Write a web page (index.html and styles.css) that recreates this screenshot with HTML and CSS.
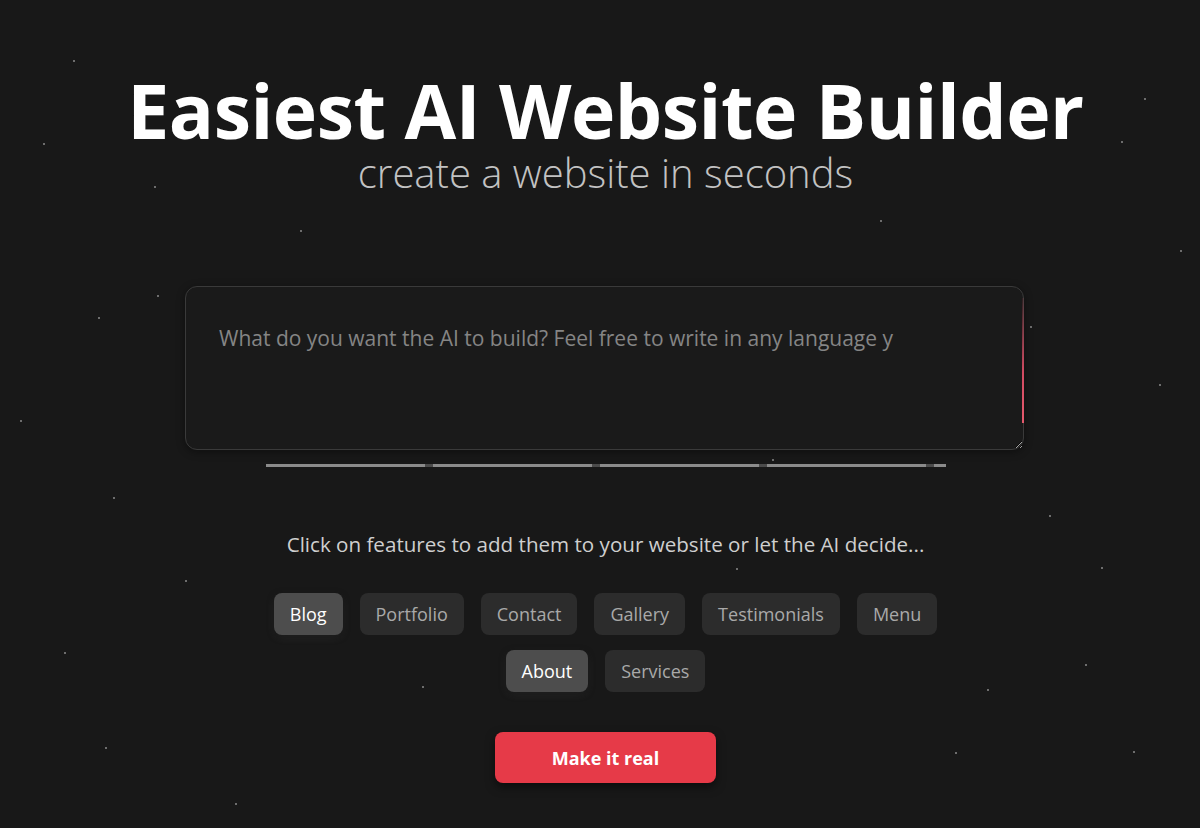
FILE: index.html
```html
<!DOCTYPE html>
<html lang="en">
<head>
<meta charset="utf-8">
<title>Easiest AI Website Builder</title>
<link rel="stylesheet" href="styles.css">
</head>
<body>
<div class="stars" aria-hidden="true">
  <span style="left:73px;top:60px"></span>
  <span style="left:43px;top:143px"></span>
  <span style="left:154px;top:186px"></span>
  <span style="left:157px;top:295px"></span>
  <span style="left:98px;top:317px"></span>
  <span style="left:1121px;top:141px"></span>
  <span style="left:1144px;top:98px"></span>
  <span style="left:1030px;top:326px"></span>
  <span style="left:1159px;top:384px"></span>
  <span style="left:113px;top:497px"></span>
  <span style="left:1049px;top:515px"></span>
  <span style="left:1101px;top:567px"></span>
  <span style="left:185px;top:580px"></span>
  <span style="left:64px;top:652px"></span>
  <span style="left:1085px;top:664px"></span>
  <span style="left:987px;top:689px"></span>
  <span style="left:105px;top:747px"></span>
  <span style="left:955px;top:752px"></span>
  <span style="left:1133px;top:751px"></span>
  <span style="left:235px;top:803px"></span>
  <span style="left:772px;top:459px"></span>
  <span style="left:736px;top:568px"></span>
  <span style="left:422px;top:686px"></span>
  <span style="left:20px;top:420px"></span>
  <span style="left:1180px;top:250px"></span>
  <span style="left:300px;top:230px"></span>
  <span style="left:880px;top:220px"></span>
</div>
<main class="page">
  <header class="hero">
    <h1 class="title">Easiest AI Website Builder</h1>
    <p class="subtitle">create a website in seconds</p>
  </header>

  <section class="prompt">
    <div class="prompt-box">
      <textarea class="prompt-input" placeholder="What do you want the AI to build? Feel free to write in any language y"></textarea>
      <span class="glow"></span>
    </div>
    <div class="progress">
      <span class="seg"></span><span class="gap"></span>
      <span class="seg"></span><span class="gap"></span>
      <span class="seg"></span><span class="gap"></span>
      <span class="seg"></span><span class="gap"></span>
      <span class="seg tail"></span>
    </div>
  </section>

  <section class="features">
    <p class="hint">Click on features to add them to your website or let the AI decide...</p>
    <div class="chips">
      <button class="chip active">Blog</button>
      <button class="chip">Portfolio</button>
      <button class="chip">Contact</button>
      <button class="chip">Gallery</button>
      <button class="chip">Testimonials</button>
      <button class="chip">Menu</button>
      <button class="chip active">About</button>
      <button class="chip">Services</button>
    </div>
    <button class="cta">Make it real</button>
  </section>
</main>
</body>
</html>
```

FILE: styles.css
```css
* { box-sizing: border-box; }
html, body { margin: 0; padding: 0; }
body {
  background: #181818;
  color: #fff;
  font-family: "Open Sans", "Noto Sans", "DejaVu Sans", sans-serif;
  min-height: 828px;
  overflow: hidden;
  position: relative;
}
.stars { position: absolute; inset: 0; pointer-events: none; }
.stars span {
  position: absolute;
  width: 2px; height: 2px;
  border-radius: 50%;
  background: #8a8a8a;
}
.page {
  display: flex;
  flex-direction: column;
  align-items: center;
  padding-top: 70px;
  padding-left: 11px;
  position: relative;
}
.hero {
  text-align: center;
  display: flex;
  flex-direction: column;
  align-items: center;
}
.title {
  margin: 0;
  font-size: 75px;
  font-weight: 700;
  line-height: 80px;
  letter-spacing: -0.5px;
  color: #fff;
}
.subtitle {
  margin: 0;
  font-size: 40px;
  font-weight: 300;
  line-height: 46px;
  color: #c2c2c2;
}
.prompt {
  margin-top: 90px;
  display: flex;
  flex-direction: column;
  align-items: center;
}
.prompt-box {
  position: relative;
  width: 839px;
  height: 164px;
  margin-left: -2px;
}
.prompt-input {
  display: block;
  width: 100%;
  height: 100%;
  background: #1a1a1a;
  border: 1px solid #3a3a3a;
  border-radius: 12px;
  padding: 37px 33px;
  font-family: inherit;
  font-size: 21px;
  color: #ddd;
  outline: none;
  resize: vertical;
  box-shadow: 0 2px 8px rgba(0,0,0,0.4);
}
.prompt-input::placeholder { color: #858585; }
.glow {
  position: absolute;
  right: 0;
  top: 12px;
  width: 2px;
  height: 125px;
  background: linear-gradient(to bottom, rgba(220,80,100,0.1), #d24b62 60%, #e55a6d);
}
.progress {
  display: flex;
  width: 679px;
  height: 3px;
  margin-top: 14px;
}
.progress .seg { flex: 0 0 159px; background: #8b8b8b; }
.progress .gap { flex: 0 0 8px; background: #4b4b4b; }
.progress .seg.tail { flex: 0 0 12px; }
.features {
  display: flex;
  flex-direction: column;
  align-items: center;
  margin-top: 63px;
}
.hint {
  margin: 0;
  font-size: 20.6px;
  color: #cfcfcf;
  line-height: 28px;
}
.chips {
  display: flex;
  flex-wrap: wrap;
  justify-content: center;
  gap: 15px 17px;
  width: 680px;
  margin-top: 35px;
}
.chip {
  height: 42px;
  padding: 0 16px;
  border: none;
  border-radius: 8px;
  background: #2c2c2c;
  color: #a9a9a9;
  font-family: inherit;
  font-size: 18px;
  cursor: pointer;
}
.chip.active {
  background: #4d4d4d;
  color: #fff;
  box-shadow: 0 3px 10px rgba(255,255,255,0.08), 0 2px 6px rgba(0,0,0,0.5);
}
.cta {
  margin-top: 40px;
  width: 221px;
  height: 51px;
  border: none;
  border-radius: 8px;
  background: #e63a48;
  color: #fff;
  font-family: inherit;
  font-size: 18px;
  font-weight: 700;
  box-shadow: 0 4px 10px rgba(0,0,0,0.5);
  cursor: pointer;
}
```
